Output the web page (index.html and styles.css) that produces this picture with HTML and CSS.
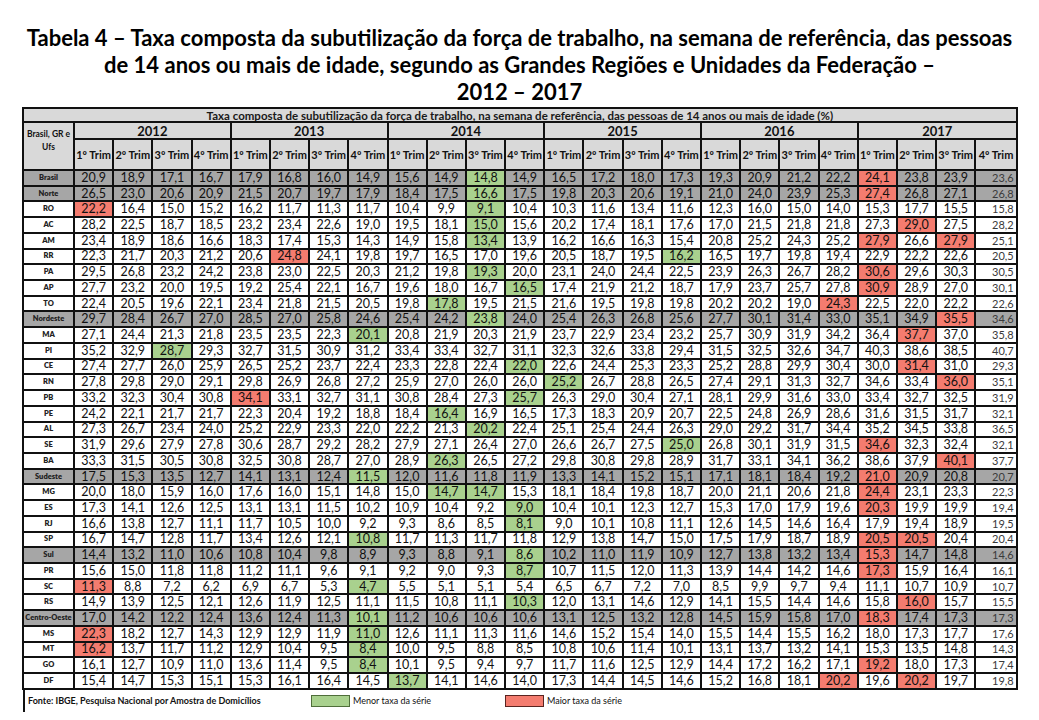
FILE: index.html
```html
<!DOCTYPE html>
<html lang="pt-BR">
<head>
<meta charset="utf-8">
<title>Tabela 4 – Taxa composta da subutilização da força de trabalho</title>
<link rel="stylesheet" href="styles.css">
</head>
<body>
<h1 class="title">
<span class="tline">Tabela 4 – Taxa composta da subutilização da força de trabalho, na semana de referência, das pessoas</span>
<span class="tline">de 14 anos ou mais de idade, segundo as Grandes Regiões e Unidades da Federação –</span>
<span class="tline">2012 – 2017</span>
</h1>
<div class="sheet">
<table class="data">
<colgroup>
<col class="c-lab">
<col class="c-q"><col class="c-q"><col class="c-q"><col class="c-q">
<col class="c-q"><col class="c-q"><col class="c-q"><col class="c-q">
<col class="c-q"><col class="c-q"><col class="c-q"><col class="c-q">
<col class="c-q"><col class="c-q"><col class="c-q"><col class="c-q">
<col class="c-q"><col class="c-q"><col class="c-q"><col class="c-q">
<col class="c-q"><col class="c-q"><col class="c-q"><col class="c-last">
</colgroup>
<thead>
<tr class="h-sub"><th colspan="25">Taxa composta de subutilização da força de trabalho, na semana de referência, das pessoas de 14 anos ou mais de idade (%)</th></tr>
<tr class="h-year">
<th class="lab-head" rowspan="2">Brasil, GR e<br>Ufs</th>
<th colspan="4">2012</th><th colspan="4">2013</th><th colspan="4">2014</th><th colspan="4">2015</th><th colspan="4">2016</th><th colspan="4">2017</th>
</tr>
<tr class="h-trim">
<th>1º Trim</th><th>2º Trim</th><th>3º Trim</th><th>4º Trim</th>
<th>1º Trim</th><th>2º Trim</th><th>3º Trim</th><th>4º Trim</th>
<th>1º Trim</th><th>2º Trim</th><th>3º Trim</th><th>4º Trim</th>
<th>1º Trim</th><th>2º Trim</th><th>3º Trim</th><th>4º Trim</th>
<th>1º Trim</th><th>2º Trim</th><th>3º Trim</th><th>4º Trim</th>
<th>1º Trim</th><th>2º Trim</th><th>3º Trim</th><th>4º Trim</th>
</tr>
</thead>
<tbody>
<tr class="reg"><th>Brasil</th><td>20,9</td><td>18,9</td><td>17,1</td><td>16,7</td><td>17,9</td><td>16,8</td><td>16,0</td><td>14,9</td><td>15,6</td><td>14,9</td><td class="g">14,8</td><td>14,9</td><td>16,5</td><td>17,2</td><td>18,0</td><td>17,3</td><td>19,3</td><td>20,9</td><td>21,2</td><td>22,2</td><td class="r">24,1</td><td>23,8</td><td>23,9</td><td>23,6</td></tr>
<tr class="reg"><th>Norte</th><td>26,5</td><td>23,0</td><td>20,6</td><td>20,9</td><td>21,5</td><td>20,7</td><td>19,7</td><td>17,9</td><td>18,4</td><td>17,5</td><td class="g">16,6</td><td>17,5</td><td>19,8</td><td>20,3</td><td>20,6</td><td>19,1</td><td>21,0</td><td>24,0</td><td>23,9</td><td>25,3</td><td class="r">27,4</td><td>26,8</td><td>27,1</td><td>26,8</td></tr>
<tr><th>RO</th><td class="r">22,2</td><td>16,4</td><td>15,0</td><td>15,2</td><td>16,2</td><td>11,7</td><td>11,3</td><td>11,7</td><td>10,4</td><td>9,9</td><td class="g">9,1</td><td>10,4</td><td>10,3</td><td>11,6</td><td>13,4</td><td>11,6</td><td>12,3</td><td>16,0</td><td>15,0</td><td>14,0</td><td>15,3</td><td>17,7</td><td>15,5</td><td>15,8</td></tr>
<tr><th>AC</th><td>28,2</td><td>22,5</td><td>18,7</td><td>18,5</td><td>23,2</td><td>23,4</td><td>22,6</td><td>19,0</td><td>19,5</td><td>18,1</td><td class="g">15,0</td><td>15,6</td><td>20,2</td><td>17,4</td><td>18,1</td><td>17,6</td><td>17,0</td><td>21,5</td><td>21,8</td><td>21,8</td><td>27,3</td><td class="r">29,0</td><td>27,5</td><td>28,2</td></tr>
<tr><th>AM</th><td>23,4</td><td>18,9</td><td>18,6</td><td>16,6</td><td>18,3</td><td>17,4</td><td>15,3</td><td>14,3</td><td>14,9</td><td>15,8</td><td class="g">13,4</td><td>13,9</td><td>16,2</td><td>16,6</td><td>16,3</td><td>15,4</td><td>20,8</td><td>25,2</td><td>24,3</td><td>25,2</td><td class="r">27,9</td><td>26,6</td><td class="r">27,9</td><td>25,1</td></tr>
<tr><th>RR</th><td>22,3</td><td>21,7</td><td>20,3</td><td>21,2</td><td>20,6</td><td class="r">24,8</td><td>24,1</td><td>19,8</td><td>19,7</td><td>16,5</td><td>17,0</td><td>19,6</td><td>20,5</td><td>18,7</td><td>19,5</td><td class="g">16,2</td><td>16,5</td><td>19,7</td><td>19,8</td><td>19,4</td><td>22,9</td><td>22,2</td><td>22,6</td><td>20,5</td></tr>
<tr><th>PA</th><td>29,5</td><td>26,8</td><td>23,2</td><td>24,2</td><td>23,8</td><td>23,0</td><td>22,5</td><td>20,3</td><td>21,2</td><td>19,8</td><td class="g">19,3</td><td>20,0</td><td>23,1</td><td>24,0</td><td>24,4</td><td>22,5</td><td>23,9</td><td>26,3</td><td>26,7</td><td>28,2</td><td class="r">30,6</td><td>29,6</td><td>30,3</td><td>30,5</td></tr>
<tr><th>AP</th><td>27,7</td><td>23,2</td><td>20,0</td><td>19,5</td><td>19,2</td><td>25,4</td><td>22,1</td><td>16,7</td><td>19,6</td><td>18,0</td><td>16,7</td><td class="g">16,5</td><td>17,4</td><td>21,9</td><td>21,2</td><td>18,7</td><td>17,9</td><td>23,7</td><td>25,7</td><td>27,8</td><td class="r">30,9</td><td>28,9</td><td>27,0</td><td>30,1</td></tr>
<tr><th>TO</th><td>22,4</td><td>20,5</td><td>19,6</td><td>22,1</td><td>23,4</td><td>21,8</td><td>21,5</td><td>20,5</td><td>19,8</td><td class="g">17,8</td><td>19,5</td><td>21,5</td><td>21,6</td><td>19,5</td><td>19,8</td><td>19,8</td><td>20,2</td><td>20,2</td><td>19,0</td><td class="r">24,3</td><td>22,5</td><td>22,0</td><td>22,2</td><td>22,6</td></tr>
<tr class="reg"><th>Nordeste</th><td>29,7</td><td>28,4</td><td>26,7</td><td>27,0</td><td>28,5</td><td>27,0</td><td>25,8</td><td>24,6</td><td>25,4</td><td>24,2</td><td class="g">23,8</td><td>24,0</td><td>25,4</td><td>26,3</td><td>26,8</td><td>25,6</td><td>27,7</td><td>30,1</td><td>31,4</td><td>33,0</td><td>35,1</td><td>34,9</td><td class="r">35,5</td><td>34,6</td></tr>
<tr><th>MA</th><td>27,1</td><td>24,4</td><td>21,3</td><td>21,8</td><td>23,5</td><td>23,5</td><td>22,3</td><td class="g">20,1</td><td>20,8</td><td>21,9</td><td>20,3</td><td>21,9</td><td>23,7</td><td>22,9</td><td>23,4</td><td>23,2</td><td>25,7</td><td>30,9</td><td>31,9</td><td>34,2</td><td>36,4</td><td class="r">37,7</td><td>37,0</td><td>35,8</td></tr>
<tr><th>PI</th><td>35,2</td><td>32,9</td><td class="g">28,7</td><td>29,3</td><td>32,7</td><td>31,5</td><td>30,9</td><td>31,2</td><td>33,4</td><td>33,4</td><td>32,7</td><td>31,1</td><td>32,3</td><td>32,6</td><td>33,8</td><td>29,4</td><td>31,5</td><td>32,5</td><td>32,6</td><td>34,7</td><td>40,3</td><td>38,6</td><td>38,5</td><td>40,7</td></tr>
<tr><th>CE</th><td>27,4</td><td>27,7</td><td>26,0</td><td>25,9</td><td>26,5</td><td>25,2</td><td>23,7</td><td>22,4</td><td>23,3</td><td>22,8</td><td>22,4</td><td class="g">22,0</td><td>22,6</td><td>24,4</td><td>25,3</td><td>23,3</td><td>25,2</td><td>28,8</td><td>29,9</td><td>30,4</td><td>30,0</td><td class="r">31,4</td><td>31,0</td><td>29,3</td></tr>
<tr><th>RN</th><td>27,8</td><td>29,8</td><td>29,0</td><td>29,1</td><td>29,8</td><td>26,9</td><td>26,8</td><td>27,2</td><td>25,9</td><td>27,0</td><td>26,0</td><td>26,0</td><td class="g">25,2</td><td>26,7</td><td>28,8</td><td>26,5</td><td>27,4</td><td>29,1</td><td>31,3</td><td>32,7</td><td>34,6</td><td>33,4</td><td class="r">36,0</td><td>35,1</td></tr>
<tr><th>PB</th><td>33,2</td><td>32,3</td><td>30,4</td><td>30,8</td><td class="r">34,1</td><td>33,1</td><td>32,7</td><td>31,1</td><td>30,8</td><td>28,4</td><td>27,3</td><td class="g">25,7</td><td>26,3</td><td>29,0</td><td>30,4</td><td>27,1</td><td>28,1</td><td>29,9</td><td>31,6</td><td>33,0</td><td>33,4</td><td>32,7</td><td>32,5</td><td>31,9</td></tr>
<tr><th>PE</th><td>24,2</td><td>22,1</td><td>21,7</td><td>21,7</td><td>22,3</td><td>20,4</td><td>19,2</td><td>18,8</td><td>18,4</td><td class="g">16,4</td><td>16,9</td><td>16,5</td><td>17,3</td><td>18,3</td><td>20,9</td><td>20,7</td><td>22,5</td><td>24,8</td><td>26,9</td><td>28,6</td><td>31,6</td><td>31,5</td><td>31,7</td><td>32,1</td></tr>
<tr><th>AL</th><td>27,3</td><td>26,7</td><td>23,4</td><td>24,0</td><td>25,2</td><td>22,9</td><td>23,3</td><td>22,0</td><td>22,2</td><td>21,3</td><td class="g">20,2</td><td>22,4</td><td>25,1</td><td>25,4</td><td>24,4</td><td>26,3</td><td>29,0</td><td>29,2</td><td>31,7</td><td>34,4</td><td>35,2</td><td>34,5</td><td>33,8</td><td>36,5</td></tr>
<tr><th>SE</th><td>31,9</td><td>29,6</td><td>27,9</td><td>27,8</td><td>30,6</td><td>28,7</td><td>29,2</td><td>28,2</td><td>27,9</td><td>27,1</td><td>26,4</td><td>27,0</td><td>26,6</td><td>26,7</td><td>27,5</td><td class="g">25,0</td><td>26,8</td><td>30,1</td><td>31,9</td><td>31,5</td><td class="r">34,6</td><td>32,3</td><td>32,4</td><td>32,1</td></tr>
<tr><th>BA</th><td>33,3</td><td>31,5</td><td>30,5</td><td>30,8</td><td>32,5</td><td>30,8</td><td>28,7</td><td>27,0</td><td>28,9</td><td class="g">26,3</td><td>26,5</td><td>27,2</td><td>29,8</td><td>30,8</td><td>29,8</td><td>28,9</td><td>31,7</td><td>33,1</td><td>34,1</td><td>36,2</td><td>38,6</td><td>37,9</td><td class="r">40,1</td><td>37,7</td></tr>
<tr class="reg"><th>Sudeste</th><td>17,5</td><td>15,3</td><td>13,5</td><td>12,7</td><td>14,1</td><td>13,1</td><td>12,4</td><td class="g">11,5</td><td>12,0</td><td>11,6</td><td>11,8</td><td>11,9</td><td>13,3</td><td>14,1</td><td>15,2</td><td>15,1</td><td>17,1</td><td>18,1</td><td>18,4</td><td>19,2</td><td class="r">21,0</td><td>20,9</td><td>20,8</td><td>20,7</td></tr>
<tr><th>MG</th><td>20,0</td><td>18,0</td><td>15,9</td><td>16,0</td><td>17,6</td><td>16,0</td><td>15,1</td><td>14,8</td><td>15,0</td><td class="g">14,7</td><td class="g">14,7</td><td>15,3</td><td>18,1</td><td>18,4</td><td>19,8</td><td>18,7</td><td>20,0</td><td>21,1</td><td>20,6</td><td>21,8</td><td class="r">24,4</td><td>23,1</td><td>23,3</td><td>22,3</td></tr>
<tr><th>ES</th><td>17,3</td><td>14,1</td><td>12,6</td><td>12,5</td><td>13,1</td><td>13,1</td><td>11,5</td><td>10,2</td><td>10,9</td><td>10,4</td><td>9,2</td><td class="g">9,0</td><td>10,4</td><td>10,1</td><td>12,3</td><td>12,7</td><td>15,3</td><td>17,0</td><td>17,9</td><td>19,6</td><td class="r">20,3</td><td>19,9</td><td>19,9</td><td>19,4</td></tr>
<tr><th>RJ</th><td>16,6</td><td>13,8</td><td>12,7</td><td>11,1</td><td>11,7</td><td>10,5</td><td>10,0</td><td>9,2</td><td>9,3</td><td>8,6</td><td>8,5</td><td class="g">8,1</td><td>9,0</td><td>10,1</td><td>10,8</td><td>11,1</td><td>12,6</td><td>14,5</td><td>14,6</td><td>16,4</td><td>17,9</td><td>19,4</td><td>18,9</td><td>19,5</td></tr>
<tr><th>SP</th><td>16,7</td><td>14,7</td><td>12,8</td><td>11,7</td><td>13,4</td><td>12,6</td><td>12,1</td><td class="g">10,8</td><td>11,7</td><td>11,3</td><td>11,7</td><td>11,8</td><td>12,9</td><td>13,8</td><td>14,7</td><td>15,0</td><td>17,5</td><td>17,9</td><td>18,7</td><td>18,9</td><td class="r">20,5</td><td class="r">20,5</td><td>20,4</td><td>20,4</td></tr>
<tr class="reg"><th>Sul</th><td>14,4</td><td>13,2</td><td>11,0</td><td>10,6</td><td>10,8</td><td>10,4</td><td>9,8</td><td>8,9</td><td>9,3</td><td>8,8</td><td>9,1</td><td class="g">8,6</td><td>10,2</td><td>11,0</td><td>11,9</td><td>10,9</td><td>12,7</td><td>13,8</td><td>13,2</td><td>13,4</td><td class="r">15,3</td><td>14,7</td><td>14,8</td><td>14,6</td></tr>
<tr><th>PR</th><td>15,6</td><td>15,0</td><td>11,8</td><td>11,8</td><td>11,2</td><td>11,1</td><td>9,6</td><td>9,1</td><td>9,2</td><td>9,0</td><td>9,3</td><td class="g">8,7</td><td>10,7</td><td>11,5</td><td>12,0</td><td>11,3</td><td>13,9</td><td>14,4</td><td>14,2</td><td>14,6</td><td class="r">17,3</td><td>15,9</td><td>16,4</td><td>16,1</td></tr>
<tr><th>SC</th><td class="r">11,3</td><td>8,8</td><td>7,2</td><td>6,2</td><td>6,9</td><td>6,7</td><td>5,3</td><td class="g">4,7</td><td>5,5</td><td>5,1</td><td>5,1</td><td>5,4</td><td>6,5</td><td>6,7</td><td>7,2</td><td>7,0</td><td>8,5</td><td>9,9</td><td>9,7</td><td>9,4</td><td>11,1</td><td>10,7</td><td>10,9</td><td>10,7</td></tr>
<tr><th>RS</th><td>14,9</td><td>13,9</td><td>12,5</td><td>12,1</td><td>12,6</td><td>11,9</td><td>12,5</td><td>11,1</td><td>11,5</td><td>10,8</td><td>11,1</td><td class="g">10,3</td><td>12,0</td><td>13,1</td><td>14,6</td><td>12,9</td><td>14,1</td><td>15,5</td><td>14,4</td><td>14,6</td><td>15,8</td><td class="r">16,0</td><td>15,7</td><td>15,5</td></tr>
<tr class="reg"><th>Centro-Oeste</th><td>17,0</td><td>14,2</td><td>12,2</td><td>12,4</td><td>13,6</td><td>12,4</td><td>11,3</td><td class="g">10,1</td><td>11,2</td><td>10,6</td><td>10,6</td><td>10,6</td><td>13,1</td><td>12,5</td><td>13,2</td><td>12,8</td><td>14,5</td><td>15,9</td><td>15,8</td><td>17,0</td><td class="r">18,3</td><td>17,4</td><td>17,3</td><td>17,3</td></tr>
<tr><th>MS</th><td class="r">22,3</td><td>18,2</td><td>12,7</td><td>14,3</td><td>12,9</td><td>12,9</td><td>11,9</td><td class="g">11,0</td><td>12,6</td><td>11,1</td><td>11,3</td><td>11,6</td><td>14,6</td><td>15,2</td><td>15,4</td><td>14,0</td><td>15,5</td><td>14,4</td><td>15,5</td><td>16,2</td><td>18,0</td><td>17,3</td><td>17,7</td><td>17,6</td></tr>
<tr><th>MT</th><td class="r">16,2</td><td>13,7</td><td>11,7</td><td>11,2</td><td>12,9</td><td>10,4</td><td>9,5</td><td class="g">8,4</td><td>10,0</td><td>9,5</td><td>8,8</td><td>8,5</td><td>10,8</td><td>10,6</td><td>11,4</td><td>10,1</td><td>13,1</td><td>13,7</td><td>13,2</td><td>14,1</td><td>15,3</td><td>13,5</td><td>14,8</td><td>14,3</td></tr>
<tr><th>GO</th><td>16,1</td><td>12,7</td><td>10,9</td><td>11,0</td><td>13,6</td><td>11,4</td><td>9,5</td><td class="g">8,4</td><td>10,1</td><td>9,5</td><td>9,4</td><td>9,7</td><td>11,7</td><td>11,6</td><td>12,5</td><td>12,9</td><td>14,4</td><td>17,2</td><td>16,2</td><td>17,1</td><td class="r">19,2</td><td>18,0</td><td>17,3</td><td>17,4</td></tr>
<tr><th>DF</th><td>15,4</td><td>14,7</td><td>15,3</td><td>15,1</td><td>15,3</td><td>16,1</td><td>16,4</td><td>14,5</td><td class="g">13,7</td><td>14,1</td><td>14,6</td><td>14,0</td><td>17,3</td><td>14,4</td><td>14,5</td><td>14,6</td><td>15,2</td><td>16,8</td><td>18,1</td><td class="r">20,2</td><td>19,6</td><td class="r">20,2</td><td>19,7</td><td>19,8</td></tr>
</tbody>
</table>
<div class="foot">
<span class="src">Fonte: IBGE, Pesquisa Nacional por Amostra de Domicílios</span>
<span class="key key-min"></span><span class="key-label">Menor taxa da série</span>
<span class="key key-max"></span><span class="key-label">Maior taxa da série</span>
</div>
</div>
</body>
</html>
```
FILE: styles.css
```css
html, body {
  margin: 0;
  padding: 0;
  background: #ffffff;
}

body {
  font-family: Lato, "Liberation Sans", "Noto Sans", sans-serif;
  color: #111111;
}

.title {
  margin: 0;
  padding-top: 24px;
  text-align: center;
  font-size: 22px;
  line-height: 27px;
  font-weight: 700;
  color: #000000;
}

.tline {
  display: block;
}

.sheet {
  margin: 2px 0 0 22px;
  width: 994px;
}

.data {
  border-collapse: collapse;
  table-layout: fixed;
  width: 994px;
}

.c-lab { width: 51px; }
.c-q { width: 39.2px; }
.c-last { width: 41.4px; }

.data th,
.data td {
  border: 2px solid #111111;
  padding: 0;
  text-align: center;
  white-space: nowrap;
  overflow: hidden;
}

.h-sub th {
  height: 12px;
  background: #d9d9d9;
  font-size: 11.5px;
  line-height: 11px;
  font-weight: 700;
  color: #1a1a1a;
}

.h-year th {
  height: 15px;
  background: #d9d9d9;
  font-size: 13px;
  line-height: 14px;
  font-weight: 700;
}

.h-trim th {
  height: 29px;
  background: #d9d9d9;
  font-size: 11px;
  line-height: 12px;
  font-weight: 700;
}

.h-year .lab-head {
  font-size: 8.5px;
  line-height: 13px;
  vertical-align: middle;
  padding-bottom: 10px;
}

.data tbody tr {
  height: 15.73px;
}

.data tbody th {
  font-size: 7.5px;
  line-height: 10px;
  font-weight: 800;
  color: #222222;
  background: #ffffff;
}

.data tbody td {
  font-size: 12.5px;
  line-height: 12px;
  color: #111111;
  background: #ffffff;
}

.data tbody td:last-child {
  text-align: right;
  padding-right: 2px;
  font-size: 11px;
  color: #3a3a3a;
}

.data tbody tr.reg th,
.data tbody tr.reg td {
  background: #a6a6a6;
}

.data tbody td.g,
.data tbody tr.reg td.g {
  background: #a9d18e;
}

.data tbody td.r,
.data tbody tr.reg td.r {
  background: #f47c6f;
}

.foot {
  display: flex;
  align-items: center;
  height: 22px;
  margin-left: 1px;
  border-left: 2px solid #111111;
  font-size: 9px;
  color: #111111;
}

.src {
  width: 283px;
  padding-left: 3px;
  font-weight: 700;
}

.key {
  width: 37px;
  height: 10px;
  margin-right: 3px;
}

.key-min {
  background: #a9d18e;
  border: 1.5px solid #4f6e3a;
}

.key-max {
  background: #f47c6f;
  border: 1.5px solid #5a2420;
}

.key-label {
  width: 152px;
}
```
